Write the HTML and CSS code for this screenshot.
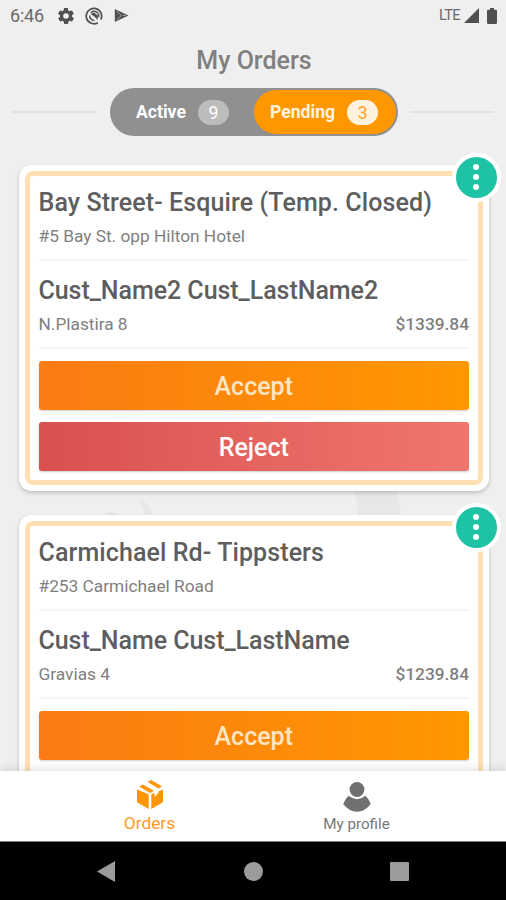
FILE: index.html
```html
<!DOCTYPE html>
<html lang="en">
<head>
<meta charset="utf-8">
<title>My Orders</title>
<link rel="stylesheet" href="styles.css">
</head>
<body>
<div class="screen">
  <header class="status">
    <span class="time">6:46</span>
    <svg class="gear" width="16" height="16" viewBox="2 2 20 20"><path fill="#505050" d="M19.4 13c0-.3.1-.6.1-1s0-.7-.1-1l2.100-1.600c.2-.2.3-.4.100-.6l-2-3.500c-.1-.2-.4-.3-.6-.2l-2.500 1c-.5-.4-1.100-.7-1.700-1l-.4-2.600c0-.2-.2-.4-.5-.4h-4c-.2 0-.5.2-.5.4l-.4 2.600c-.6.3-1.100.6-1.700 1l-2.500-1c-.2-.1-.5 0-.6.2l-2 3.500c-.1.2-.1.5.1.6L4.600 11c-.1.3-.1.700-.1 1s0 .7.100 1l-2.100 1.600c-.2.200-.3.400-.1.600l2 3.500c.1.200.4.300.6.200l2.500-1c.5.400 1.100.7 1.700 1l.4 2.600c0 .2.200.4.500.4h4c.2 0 .5-.2.500-.4l.4-2.600c.6-.3 1.100-.6 1.700-1l2.500 1c.2.100.5 0 .6-.2l2-3.500c.1-.2.1-.5-.1-.6zM12 15.500a3.500 3.500 0 1 1 0-7 3.500 3.500 0 0 1 0 7z"/></svg>
    <svg class="sync" width="18" height="18" viewBox="0 0 18 18" fill="none" stroke="#505050"><path stroke-width="1.700" d="M12.800 15.700A7.700 7.700 0 1 1 15.800 12.500"/><path stroke-width="1.500" d="M4.700 8.500A4.600 4.600 0 0 0 9.500 13.500M5.800 5.600A4.600 4.600 0 0 1 13.500 10"/><path fill="#505050" stroke="none" d="M5.500 7l3.500-1.500 4 3.200-.5 4.300-2.800-3.200z"/></svg>
    <svg class="play" width="15" height="15" viewBox="0 0 15 15"><path fill="#505050" d="M.8 1L14.500 7.500.8 14z"/><path d="M2.500 3l5 4.500-5 4.500M9 7.500h3" stroke="#aaa" stroke-width=".9" fill="none"/></svg>
    <span class="lte">LTE</span>
    <svg class="signal" width="15" height="15" viewBox="0 0 15 15"><path fill="#505050" d="M15 0v15H0z"/></svg>
    <svg class="battery" width="10" height="16" viewBox="0 0 10 16"><path fill="#505050" d="M3 0h4v1.700h1.800Q10 1.700 10 2.900v11.800Q10 16 8.800 16H1.200Q0 16 0 14.700V2.900Q0 1.700 1.200 1.700H3z"/></svg>
  </header>
  <h1 class="title">My Orders</h1>
  <div class="tabs-row">
    <span class="rule"></span>
    <div class="tabs">
      <div class="tab active">Active<span class="count">9</span></div>
      <div class="tab pending">Pending<span class="count">3</span></div>
    </div>
    <span class="rule"></span>
  </div>
  <main class="list">
    <svg class="backdrop" width="506" height="30" viewBox="0 0 506 30"><g fill="#e7e7e7"><path d="M138 9q12 3 15 17h-8q-1-9-7-17zM106 23q7-3 12 3h-12zM354 0h42q4 12 5 26h-43q0-14-4-26z"/></g></svg>
    <article class="card">
      <div class="frame">
        <h2 class="store">Bay Street- Esquire (Temp. Closed)</h2>
        <p class="line">#5 Bay St. opp Hilton Hotel</p>
        <h2>Cust_Name2 Cust_LastName2</h2>
        <p class="line">N.Plastira 8<b>$1339.84</b></p>
        <button class="accept">Accept</button>
        <button class="reject">Reject</button>
      </div>
      <span class="more"><i></i><i></i><i></i></span>
    </article>
    <article class="card">
      <div class="frame">
        <h2 class="store">Carmichael Rd- Tippsters</h2>
        <p class="line">#253 Carmichael Road</p>
        <h2>Cust_Name Cust_LastName</h2>
        <p class="line">Gravias 4<b>$1239.84</b></p>
        <button class="accept">Accept</button>
      </div>
      <span class="more"><i></i><i></i><i></i></span>
    </article>
  </main>
  <nav class="nav">
    <a class="item orders">
      <svg width="26" height="29" viewBox="0 0 26 29" fill="#ff9505"><path d="M0 9.500l11.700 4.800V29L0 22.300zM26 9.500V22.300L14.300 29V14.300l3.300-1.400v4.300l4-4.600V11.300zM2.300 6.800L6 4.600 17 10.700l-3.800 2.300zM10.500 2L14 0 25 6.300l-3.400 2.300z"/></svg>
      <span>Orders</span>
    </a>
    <a class="item profile">
      <svg width="28" height="30" viewBox="0 0 28 30" fill="#707070"><circle cx="14" cy="7.500" r="7.400"/><path d="M5.500 13.800Q14 20.500 22.500 13.800Q26 17 27.800 22Q22 29.700 14 29.700T.2 22Q2 17 5.500 13.800z"/></svg>
      <span>My profile</span>
    </a>
  </nav>
  <footer class="system">
    <svg width="18" height="21" viewBox="0 0 18 21"><path fill="#9b9b9b" d="M18 0v21L0 10.500z"/></svg>
    <span class="home"></span>
    <span class="recent"></span>
  </footer>
</div>
</body>
</html>
```
FILE: styles.css
```css
* { box-sizing: border-box; }
body { margin: 0; font-family: Roboto, "Liberation Sans", sans-serif; }
.screen { width: 506px; height: 900px; background: #efefef; display: flex; flex-direction: column; overflow: hidden; }
.status { height: 31px; flex: none; display: flex; align-items: center; padding: 0 9px 0 10px; color: #6a6a6a; }
.time { width: 48px; font-size: 18px; letter-spacing: -.2px; }
.sync { margin-left: 11px; }
.play { margin-left: 11px; }
.lte { margin-left: auto; font-size: 14.500px; letter-spacing: -.6px; }
.signal { margin-left: 4px; }
.battery { margin-left: 8px; }
.title { margin: 14px 0 0; height: 32px; line-height: 32px; flex: none; text-align: center; font-size: 25px; font-weight: 500; color: #808080; padding-left: 2px; }
.tabs-row { flex: none; height: 48px; margin-top: 11px; display: flex; align-items: center; gap: 13px; padding: 0 12px; }
.rule { height: 2px; flex: 1; background: #e1e1e1; border-radius: 2px; }
.tabs { width: 288px; height: 48px; border-radius: 24px; background: #909090; display: flex; padding: 2px; color: #fff; font-size: 17.600px; font-weight: 700; position: relative; left: .5px; }
.tab { display: flex; align-items: center; width: 142px; border-radius: 22px; }
.active { padding-left: 24.500px; }
.pending { background: #ff9800; padding-left: 16.500px; color: #fff3e0; }
.count { width: 31px; height: 25px; line-height: 26px; border-radius: 13px; background: #bcbcbc; margin-left: 12px; text-align: center; font-weight: 400; }
.pending .count { background: #fff3e0; color: #ffa52c; }
.list { flex: 1; min-height: 0; overflow: hidden; position: relative; padding: 29px 17.500px 0 18.500px; }
.backdrop { position: absolute; left: 0; top: 354px; }
.card { position: relative; height: 326px; margin-bottom: 24.400px; padding: 6px; background: #fff; border-radius: 13px; box-shadow: 0 2px 4px rgba(0,0,0,.2); }
.frame { height: 314px; border: 5px solid #ffe0b2; border-radius: 8px; padding: 9px 8.500px 0 9px; }
h2 { margin: 0; height: 35px; line-height: 35px; font-size: 25px; font-weight: 500; color: #5e5e5e; white-space: nowrap; letter-spacing: -.05px; }
.store { letter-spacing: .1px; }
.line { margin: 0 0 12px; height: 41px; padding-top: 4px; line-height: 24px; display: flex; justify-content: space-between; border-bottom: 2px solid #f5f5f5; font-size: 17.300px; color: #808080; }
h2:not(.store) + .line { margin-bottom: 11.500px; }
.line b { font-weight: 500; }
button { display: block; width: 100%; height: 49.500px; padding: 2px 0 0; border: 0; border-radius: 3px; font: 500 25px Roboto, "Liberation Sans", sans-serif; box-shadow: 0 1px 2px rgba(0,0,0,.2); }
.accept { background: linear-gradient(90deg, #fb7b14, #ff9800); color: #ffe5c2; margin-bottom: 11.500px; }
.reject { background: linear-gradient(90deg, #d9514f, #ef766d); color: #fff; }
.more { position: absolute; right: -12px; top: -12.500px; width: 49px; height: 49px; border: 4px solid #fff; border-radius: 50%; background: #1ec2a5; display: flex; flex-direction: column; align-items: center; justify-content: center; gap: 4px; }
.more i { width: 6px; height: 6px; border-radius: 50%; background: #fff; }
.nav { position: relative; flex: none; height: 70px; background: #fff; box-shadow: 0 -2px 9px rgba(0,0,0,.12); display: flex; padding: 0 46px; }
.item { flex: 1; display: flex; flex-direction: column; align-items: center; }
.orders { color: #ff9b25; font-size: 17.300px; padding-top: 9px; }
.orders span { line-height: 24px; margin-top: 2px; }
.profile { color: #777; font-size: 15.200px; padding-top: 11px; }
.profile span { line-height: 22px; margin-top: 1px; }
.system { flex: none; height: 59px; background: #000; border-top: 1px solid #888; display: flex; align-items: center; padding-left: 97px; }
.home { width: 19px; height: 19px; border-radius: 50%; background: #9b9b9b; margin-left: 129px; }
.recent { width: 19px; height: 19px; border-radius: 1px; background: #9b9b9b; margin-left: 127px; }
```
